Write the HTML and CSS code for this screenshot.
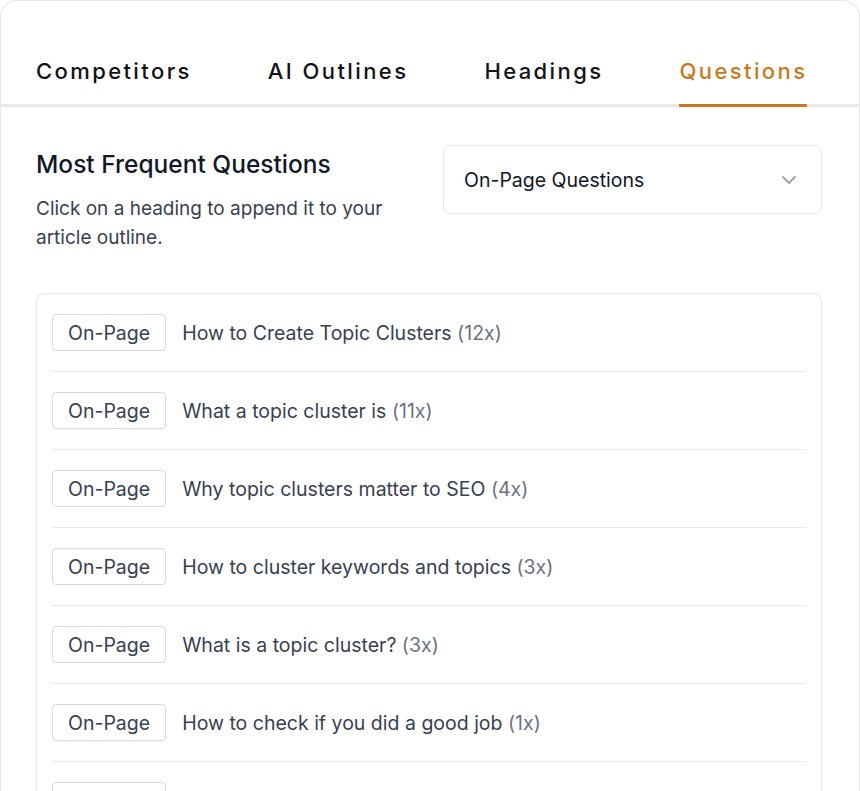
FILE: index.html
```html
<!DOCTYPE html>
<html lang="en">
<head>
<meta charset="utf-8">
<title>Questions</title>
<link rel="stylesheet" href="styles.css">
</head>
<body>
<div class="panel">
  <nav class="tabs">
    <div class="tab">Competitors</div>
    <div class="tab">AI Outlines</div>
    <div class="tab">Headings</div>
    <div class="tab active">Questions</div>
  </nav>
  <main class="content">
    <section class="intro">
      <div class="intro-text">
        <h2 class="title">Most Frequent Questions</h2>
        <p class="desc">Click on a heading to append it to your article outline.</p>
      </div>
      <div class="select">
        <span class="select-label">On-Page Questions</span>
        <svg class="chevron" width="16" height="10" viewBox="0 0 16 10"><path d="M2 2l6 6 6-6" fill="none" stroke="#9ca3af" stroke-width="1.8" stroke-linecap="round" stroke-linejoin="round"/></svg>
      </div>
    </section>
    <ul class="list">
      <li class="row"><span class="badge">On-Page</span><span class="q">How to Create Topic Clusters <span class="count">(12x)</span></span></li>
      <li class="row"><span class="badge">On-Page</span><span class="q">What a topic cluster is <span class="count">(11x)</span></span></li>
      <li class="row"><span class="badge">On-Page</span><span class="q">Why topic clusters matter to SEO <span class="count">(4x)</span></span></li>
      <li class="row"><span class="badge">On-Page</span><span class="q">How to cluster keywords and topics <span class="count">(3x)</span></span></li>
      <li class="row"><span class="badge">On-Page</span><span class="q">What is a topic cluster? <span class="count">(3x)</span></span></li>
      <li class="row"><span class="badge">On-Page</span><span class="q">How to check if you did a good job <span class="count">(1x)</span></span></li>
      <li class="row"><span class="badge">On-Page</span><span class="q">How to choose your pillar page topic <span class="count">(1x)</span></span></li>
    </ul>
  </main>
</div>
</body>
</html>
```

FILE: styles.css
```css
* { box-sizing: border-box; }

html, body {
  margin: 0;
  padding: 0;
  background: #ffffff;
}

body {
  font-family: Inter, "Noto Sans", "Liberation Sans", sans-serif;
  color: #111827;
  overflow: hidden;
}

.panel {
  width: 860px;
  min-height: 830px;
  border: 1px solid #e7e7e7;
  border-bottom: none;
  border-radius: 17px 17px 0 0;
  background: #fff;
}

.tabs {
  display: flex;
  gap: 76px;
  padding: 58px 35px 0;
  border-bottom: 3px solid #e9e9e9;
}

.tab {
  font-size: 22px;
  font-weight: 500;
  letter-spacing: 2.4px;
  color: #111318;
  line-height: 24px;
  padding-bottom: 21px;
  margin-bottom: -3px;
  border-bottom: 3px solid transparent;
}

.tab.active {
  color: #c77a1c;
  border-bottom-color: #c77a1c;
}

.content {
  padding: 38px 37px 0 35px;
}

.intro {
  display: flex;
  justify-content: space-between;
  align-items: flex-start;
}

.intro-text {
  width: 380px;
  padding-top: 3px;
}

.title {
  margin: 0;
  font-size: 24.5px;
  font-weight: 500;
  line-height: 32px;
  color: #111827;
}

.desc {
  margin: 14px 0 0;
  font-size: 19px;
  line-height: 29px;
  color: #374151;
}

.select {
  width: 379px;
  height: 69px;
  border: 1px solid #e5e7eb;
  border-radius: 7px;
  display: flex;
  align-items: center;
  justify-content: space-between;
  padding: 0 24px 0 20px;
}

.select-label {
  font-size: 19.5px;
  color: #111827;
}

.list {
  list-style: none;
  margin: 41px 0 0;
  padding: 0 15px;
  border: 1px solid #e7e7e7;
  border-radius: 8px;
  border-bottom: none;
}

.row {
  display: flex;
  align-items: center;
  gap: 16px;
  padding: 20px 0;
  border-bottom: 1px solid #e9e9e9;
}

.badge {
  height: 37px;
  display: inline-flex;
  align-items: center;
  padding: 0 15px;
  border: 1px solid #d9d9d9;
  border-radius: 4px;
  font-size: 19.5px;
  color: #374151;
}

.q {
  font-size: 19.5px;
  color: #374151;
}

.count {
  color: #6b7280;
}
```
